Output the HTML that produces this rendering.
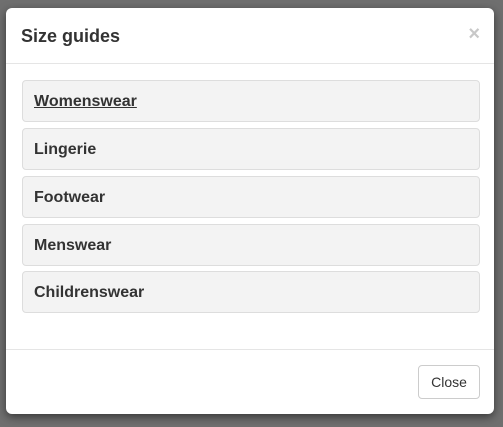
<!DOCTYPE html>
<html><head><style>
body{margin:0;width:503px;height:427px;background:#6f6f6f;font-family:"Liberation Sans",Arial,sans-serif;overflow:hidden;position:relative}
.m{position:absolute;left:6px;top:8px;width:488px;height:406px;background:#fff;border-radius:6px;box-shadow:0 3px 9px rgba(0,0,0,.5)}
.h{position:absolute;left:0;top:0;right:0;height:55px;border-bottom:1px solid #e5e5e5}
.h span{position:absolute;left:15px;top:18px;font-size:18px;color:#333;font-weight:bold}
.x{position:absolute;right:14px;top:15px;font-size:20px;font-weight:bold;color:#c8c8c8}
.p{position:absolute;left:16px;width:456px;height:40px;background:#f3f3f3;border:1px solid #ddd;border-radius:4px;box-sizing:content-box}
.p span{position:absolute;left:11px;top:12px;font-size:16px;color:#333;font-weight:bold}
.f{position:absolute;left:0;right:0;top:341px;border-top:1px solid #e5e5e5}
.b{position:absolute;left:412px;top:357px;width:60px;height:32px;border:1px solid #ccc;border-radius:4px;font-size:14px;color:#333;text-align:center;line-height:32px}
</style></head><body>
<div class="m">
<div class="h"><span>Size guides</span><div class="x">×</div></div>
<div class="p" style="top:72px"><span style="text-decoration:underline">Womenswear</span></div>
<div class="p" style="top:120px"><span>Lingerie</span></div>
<div class="p" style="top:168px"><span>Footwear</span></div>
<div class="p" style="top:216px"><span>Menswear</span></div>
<div class="p" style="top:263px"><span>Childrenswear</span></div>
<div class="f"></div>
<div class="b">Close</div>
</div>
</body></html>
